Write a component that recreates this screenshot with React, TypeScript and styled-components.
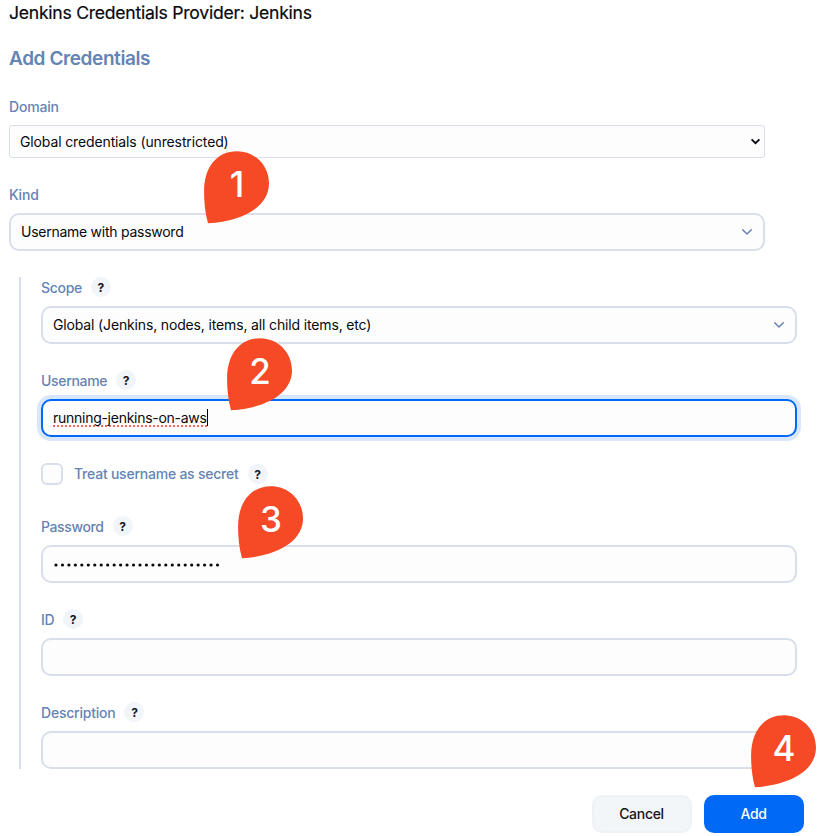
import React from "react";
import styled, { createGlobalStyle, css } from "styled-components";

const GlobalStyle = createGlobalStyle`
  *, *::before, *::after { box-sizing: border-box; }
  body {
    margin: 0;
    background: #fff;
    color: #14141f;
    font-family: Inter, "Liberation Sans", sans-serif;
    font-size: 14px;
  }
`;

const line = "#d8deea";
const muted = "#6484b3";

const Page = styled.main`
  position: relative;
  width: 838px;
  height: 836px;
  padding-left: 9px;
  overflow: hidden;
`;

const Title = styled.h1`
  margin: 0;
  height: 26px;
  line-height: 26px;
  font-size: 17.6px;
  font-weight: 400;
  letter-spacing: -0.26px;
  color: #08080f;
  -webkit-text-stroke: 0.2px #08080f;
`;

const Heading = styled.h2`
  margin: 20px 0 0;
  height: 26px;
  line-height: 26px;
  font-size: 19px;
  font-weight: 600;
  letter-spacing: -0.4px;
  color: ${muted};
`;

const Section = styled.section<{ $top: number }>`
  width: 756px;
  margin-top: ${(p) => p.$top}px;
`;

const LabelRow = styled.div`
  display: flex;
  align-items: center;
  height: 20px;
  margin-bottom: 9px;
`;

const Label = styled.label<{ $track?: number }>`
  color: ${muted};
  font-weight: 500;
  line-height: 20px;
  letter-spacing: ${(p) => p.$track ?? -0.2}px;
  white-space: nowrap;
  padding-top: 1px;
`;

const Help = styled.button`
  width: 20px;
  height: 20px;
  flex: none;
  margin: 0 0 0 9px;
  padding: 1px 0 0;
  border: 0;
  border-radius: 50%;
  background: #f1f4f8;
  color: #14141f;
  font: 700 12px/19px Inter, sans-serif;
  text-align: center;
`;

const Control = styled.div<{ $focused?: boolean; $native?: boolean; $track?: number }>`
  display: flex;
  align-items: center;
  width: 756px;
  height: 38px;
  padding: 0 11px 0 10px;
  border: 2px solid ${line};
  border-radius: 10px;
  background: #fdfdfd;
  color: #08080f;
  line-height: 20px;
  letter-spacing: ${(p) => p.$track ?? 0}px;
  ${(p) =>
    p.$native &&
    css`
      height: 33px;
      padding: 0 3px 0 10px;
      border-width: 1px;
      border-radius: 3px;
    `}
  ${(p) =>
    p.$focused &&
    css`
      border-color: #0069f5;
      box-shadow: 0 0 0 4px #d9e7fd;
    `}
`;

const Arrow = styled.svg`
  flex: none;
  margin-left: auto;
`;

const Misspelled = styled.span`
  height: 18px;
  margin-bottom: 1px;
  line-height: 17px;
  background: repeating-linear-gradient(90deg, #f4655f 0 2px, transparent 2px 4px) 0 100% / 100% 2px no-repeat;
`;

const Caret = styled.span`
  width: 1px;
  height: 17px;
  margin-bottom: 1px;
  background: #000;
`;

const Dots = styled.svg`
  display: block;
  margin-top: 1px;
`;

const Nested = styled.div`
  display: flex;
  flex-direction: column;
  width: 778px;
  height: 492px;
  margin: 26px 0 0 10px;
  padding-left: 20px;
  border-left: 2px solid ${line};
`;

const Field = styled.div<{ $top?: number }>`
  margin-top: ${(p) => p.$top ?? 26}px;
`;

const CheckRow = styled.div`
  display: flex;
  align-items: center;
  height: 22px;
  margin-top: 26px;

  ${Label} { padding-top: 0; }
`;

const Checkbox = styled.span`
  width: 22px;
  height: 22px;
  margin-right: 11px;
  border: 2px solid ${line};
  border-radius: 6px;
  background: #fdfdfd;
`;

const Actions = styled.div`
  display: flex;
  justify-content: flex-end;
  gap: 12px;
  width: 795px;
  margin-top: 26px;
`;

const Button = styled.button<{ $primary?: boolean }>`
  width: 100px;
  height: 38px;
  padding: 0 1px 0 0;
  border: 2px solid ${(p) => (p.$primary ? "#0069f5" : "#eef2f6")};
  border-radius: 10px;
  background: ${(p) => (p.$primary ? "#0069f5" : "#f2f6f9")};
  color: ${(p) => (p.$primary ? "#fff" : "#14141f")};
  font: 500 14px/20px Inter, sans-serif;
  letter-spacing: -0.3px;
`;

const Pin = styled.div<{ $x: number; $y: number }>`
  position: absolute;
  left: ${(p) => p.$x}px;
  top: ${(p) => p.$y}px;
  width: 65px;
  height: 73px;
  padding-left: 1px;
  color: #fff;
  font-size: 35px;
  font-weight: 500;
  line-height: 66px;
  text-align: center;

  svg { position: absolute; inset: 0; }
  span { position: relative; }
`;

function Marker({ x, y, n }: { x: number; y: number; n: number }) {
  return (
    <Pin $x={x} $y={y}>
      <svg width="65" height="73" viewBox="0 0 65 73">
        <path d="M4 72.3C1 62 0 50 0.1 40C0.3 16 13 0.3 33 0.3C51 0.3 65 14.5 65 32.5C65 55 40 70 4 72.3Z" fill="#f54a25" />
      </svg>
      <span>{n}</span>
    </Pin>
  );
}

function Chevron({ native }: { native?: boolean }) {
  return native ? (
    <Arrow width="11" height="8" viewBox="0 0 11 8" fill="none">
      <path d="M1.6 1.4L5.5 5.2L9.4 1.4" stroke="#08080f" strokeWidth="1.9" />
    </Arrow>
  ) : (
    <Arrow width="10" height="8" viewBox="0 0 10 8" fill="none">
      <path d="M0.7 1.7L5 6L9.3 1.7" stroke="#6484b3" strokeWidth="1.5" strokeLinecap="round" strokeLinejoin="round" />
    </Arrow>
  );
}

function FieldLabel({ text, track }: { text: string; track?: number }) {
  return (
    <LabelRow>
      <Label $track={track}>{text}</Label>
      <Help>?</Help>
    </LabelRow>
  );
}

export default function App() {
  return (
    <>
      <GlobalStyle />
      <Page>
        <Title>Jenkins Credentials Provider: Jenkins</Title>
        <Heading>Add Credentials</Heading>
        <Section $top={24}>
          <LabelRow><Label>Domain</Label></LabelRow>
          <Control $native $track={-0.13}>Global credentials (unrestricted)<Chevron native /></Control>
        </Section>
        <Section $top={26}>
          <LabelRow><Label>Kind</Label></LabelRow>
          <Control $track={-0.26}>Username with password<Chevron /></Control>
        </Section>
        <Nested>
          <Field $top={0}>
            <FieldLabel text="Scope" track={-0.3} />
            <Control $track={-0.15}>Global (Jenkins, nodes, items, all child items, etc)<Chevron /></Control>
          </Field>
          <Field>
            <FieldLabel text="Username" track={-0.32} />
            <Control $focused $track={-0.27}><Misspelled>running-jenkins-on-aws</Misspelled><Caret /></Control>
          </Field>
          <CheckRow>
            <Checkbox />
            <Label $track={-0.23}>Treat username as secret</Label>
            <Help>?</Help>
          </CheckRow>
          <Field $top={31}>
            <FieldLabel text="Password" track={-0.38} />
            <Control>
              <Dots width="168" height="4" viewBox="0 0 168 4">
                {Array.from({ length: 26 }, (_, i) => (
                  <circle key={i} cx={3 + i * 6.46} cy="2" r="1.6" fill="#08080f" />
                ))}
              </Dots>
            </Control>
          </Field>
          <Field>
            <FieldLabel text="ID" track={-0.4} />
            <Control />
          </Field>
          <Field>
            <FieldLabel text="Description" track={-0.22} />
            <Control />
          </Field>
        </Nested>
        <Actions>
          <Button>Cancel</Button>
          <Button $primary>Add</Button>
        </Actions>
        <Marker x={204} y={151} n={1} />
        <Marker x={227} y={338} n={2} />
        <Marker x={238} y={486} n={3} />
        <Marker x={751} y={715} n={4} />
      </Page>
    </>
  );
}
